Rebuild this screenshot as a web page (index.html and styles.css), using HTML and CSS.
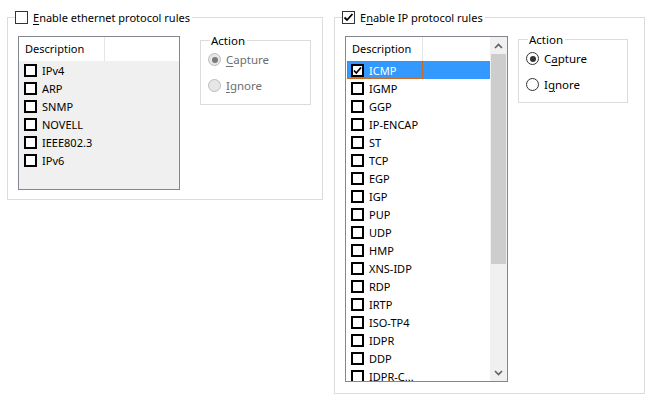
FILE: index.html
```html
<!DOCTYPE html>
<html>
<head>
<meta charset="utf-8">
<link rel="stylesheet" href="styles.css">
</head>
<body>
<div class="page">
  <fieldset class="group group-eth">
    <legend class="group-title"><span class="gcb"></span><span><u>E</u>nable ethernet protocol rules</span></legend>
    <div class="group-body">
      <div class="list list-eth">
        <div class="list-main">
          <div class="list-head"><div class="col col-eth">Description</div></div>
          <div class="rows">
            <div class="row"><span class="cell cell-eth"><span class="lcb"></span>IPv4</span></div>
            <div class="row"><span class="cell cell-eth"><span class="lcb"></span>ARP</span></div>
            <div class="row"><span class="cell cell-eth"><span class="lcb"></span>SNMP</span></div>
            <div class="row"><span class="cell cell-eth"><span class="lcb"></span>NOVELL</span></div>
            <div class="row"><span class="cell cell-eth"><span class="lcb"></span>IEEE802.3</span></div>
            <div class="row"><span class="cell cell-eth"><span class="lcb"></span>IPv6</span></div>
          </div>
        </div>
      </div>
      <fieldset class="action action-eth disabled">
        <legend class="action-title">Action</legend>
        <div class="radio-row"><span class="radio checked"></span><span><u>C</u>apture</span></div>
        <div class="radio-row"><span class="radio"></span><span><u>I</u>gnore</span></div>
      </fieldset>
    </div>
  </fieldset>

  <fieldset class="group group-ip">
    <legend class="group-title"><span class="gcb checked"><svg width="11" height="11" viewBox="0 0 11 11"><polyline points="1.5,5.5 4,8 9.5,2" fill="none" stroke="#000" stroke-width="1.8"/></svg></span><span>E<u>n</u>able IP protocol rules</span></legend>
    <div class="group-body">
      <div class="list list-ip">
        <div class="list-main">
          <div class="list-head"><div class="col col-ip">Description</div></div>
          <div class="rows">
            <div class="row selected"><span class="cell cell-ip focus"><span class="lcb checked"><svg width="9" height="9" viewBox="0 0 9 9"><polyline points="1,4.5 3.3,7 8,1.5" fill="none" stroke="#000" stroke-width="1.8"/></svg></span>ICMP</span></div>
            <div class="row"><span class="cell cell-ip"><span class="lcb"></span>IGMP</span></div>
            <div class="row"><span class="cell cell-ip"><span class="lcb"></span>GGP</span></div>
            <div class="row"><span class="cell cell-ip"><span class="lcb"></span>IP-ENCAP</span></div>
            <div class="row"><span class="cell cell-ip"><span class="lcb"></span>ST</span></div>
            <div class="row"><span class="cell cell-ip"><span class="lcb"></span>TCP</span></div>
            <div class="row"><span class="cell cell-ip"><span class="lcb"></span>EGP</span></div>
            <div class="row"><span class="cell cell-ip"><span class="lcb"></span>IGP</span></div>
            <div class="row"><span class="cell cell-ip"><span class="lcb"></span>PUP</span></div>
            <div class="row"><span class="cell cell-ip"><span class="lcb"></span>UDP</span></div>
            <div class="row"><span class="cell cell-ip"><span class="lcb"></span>HMP</span></div>
            <div class="row"><span class="cell cell-ip"><span class="lcb"></span>XNS-IDP</span></div>
            <div class="row"><span class="cell cell-ip"><span class="lcb"></span>RDP</span></div>
            <div class="row"><span class="cell cell-ip"><span class="lcb"></span>IRTP</span></div>
            <div class="row"><span class="cell cell-ip"><span class="lcb"></span>ISO-TP4</span></div>
            <div class="row"><span class="cell cell-ip"><span class="lcb"></span>IDPR</span></div>
            <div class="row"><span class="cell cell-ip"><span class="lcb"></span>DDP</span></div>
            <div class="row"><span class="cell cell-ip"><span class="lcb"></span>IDPR-C...</span></div>
          </div>
        </div>
        <div class="scrollbar">
          <div class="sb-btn"><svg width="9" height="6" viewBox="0 0 9 6"><polyline points="1,5 4.5,1.5 8,5" fill="none" stroke="#606060" stroke-width="1.6"/></svg></div>
          <div class="sb-track"><div class="sb-thumb"></div></div>
          <div class="sb-btn"><svg width="9" height="6" viewBox="0 0 9 6"><polyline points="1,1 4.5,4.5 8,1" fill="none" stroke="#606060" stroke-width="1.6"/></svg></div>
        </div>
      </div>
      <fieldset class="action action-ip">
        <legend class="action-title">Action</legend>
        <div class="radio-row"><span class="radio checked"></span><span>C<u>a</u>pture</span></div>
        <div class="radio-row"><span class="radio"></span><span>I<u>g</u>nore</span></div>
      </fieldset>
    </div>
  </fieldset>
</div>
</body>
</html>
```

FILE: styles.css
```css
* { box-sizing: border-box; }
html, body { margin: 0; padding: 0; background: #fff; }
body {
  font-family: "Noto Sans", "DejaVu Sans", sans-serif;
  font-size: 11px;
  color: #000;
  width: 651px;
  height: 401px;
  overflow: hidden;
}
u { text-decoration: underline; text-underline-offset: 2px; text-decoration-thickness: 1px; }

.page {
  display: flex;
  align-items: flex-start;
  gap: 11px;
  padding: 10px 0 0 7px;
}

.group {
  margin: 0;
  padding: 0;
  border: 1px solid #dcdcdc;
  min-width: 0;
}
.group-eth { width: 316px; height: 190px; }
.group-ip { width: 311px; height: 384px; }

.group-title {
  display: flex;
  align-items: center;
  gap: 5px;
  height: 15px;
  line-height: 15px;
  margin-left: 7px;
  padding: 0 2px 0 0;
}
.gcb {
  width: 13px;
  height: 13px;
  border: 1px solid #333;
  background: #fff;
  display: flex;
  align-items: center;
  justify-content: center;
  flex: none;
}

.group-body {
  display: flex;
  align-items: flex-start;
  padding-left: 10px;
}

.list {
  border: 1px solid #828790;
  display: flex;
  margin-top: 11px;
  overflow: hidden;
}
.list-eth { width: 162px; height: 154px; background: #f0f0f0; }
.list-ip { width: 163px; height: 346px; background: #fff; }
.list-main { flex: 1; min-width: 0; overflow: hidden; }

.list-head {
  height: 24px;
  background: #fff;
  display: flex;
}
.col {
  height: 24px;
  line-height: 24px;
  padding-left: 6px;
  border-right: 1px solid #e5e5e5;
}
.col-eth { width: 86px; }
.col-ip { width: 77px; }

.rows { padding-left: 1px; }
.row { height: 18px; display: flex; }
.cell {
  display: flex;
  align-items: center;
  height: 18px;
  padding-left: 3px;
  border: 1px solid transparent;
  white-space: nowrap;
}
.cell-eth { width: 85px; }
.cell-ip { width: 76px; }
.row.selected { background: #3399ff; color: #fff; }
.cell.focus { border: 1px dotted #c8641e; }

.lcb {
  width: 13px;
  height: 13px;
  border: 2px solid #000;
  background: #fff;
  margin-right: 5px;
  flex: none;
  display: flex;
  align-items: center;
  justify-content: center;
}

.scrollbar {
  width: 17px;
  flex: none;
  background: #f0f0f0;
  display: flex;
  flex-direction: column;
}
.sb-btn {
  height: 17px;
  display: flex;
  align-items: center;
  justify-content: center;
  flex: none;
}
.sb-track { flex: 1; }
.sb-thumb {
  height: 210px;
  margin: 0 1px;
  background: #cdcdcd;
}

.action {
  margin: 0;
  padding: 0;
  border: 1px solid #dcdcdc;
  min-width: 0;
}
.action-eth { width: 111px; height: 72px; margin-left: 20px; margin-top: 8px; }
.action-ip { width: 110px; height: 71px; margin-left: 10px; margin-top: 7px; }
.action-title {
  margin-left: 9px;
  padding: 0 2px 0 1px;
  height: 15px;
  line-height: 15px;
  font-size: 11.5px;
}
.radio-row {
  display: flex;
  align-items: center;
  gap: 5px;
  height: 15px;
  line-height: 15px;
  margin-left: 7px;
  margin-top: 11px;
  font-size: 11.5px;
}
.radio-row:first-of-type { margin-top: 4px; }
.radio {
  width: 13px;
  height: 13px;
  border-radius: 50%;
  border: 1px solid #333;
  background: #fff;
  display: flex;
  align-items: center;
  justify-content: center;
  flex: none;
}
.radio.checked::after {
  content: "";
  width: 6px;
  height: 6px;
  border-radius: 50%;
  background: #333;
}
.disabled .radio-row { color: #6d6d6d; }
.disabled .radio { border-color: #bcbcbc; background: #e6e6e6; }
.disabled .radio.checked::after { background: #7a7a7a; }
```
